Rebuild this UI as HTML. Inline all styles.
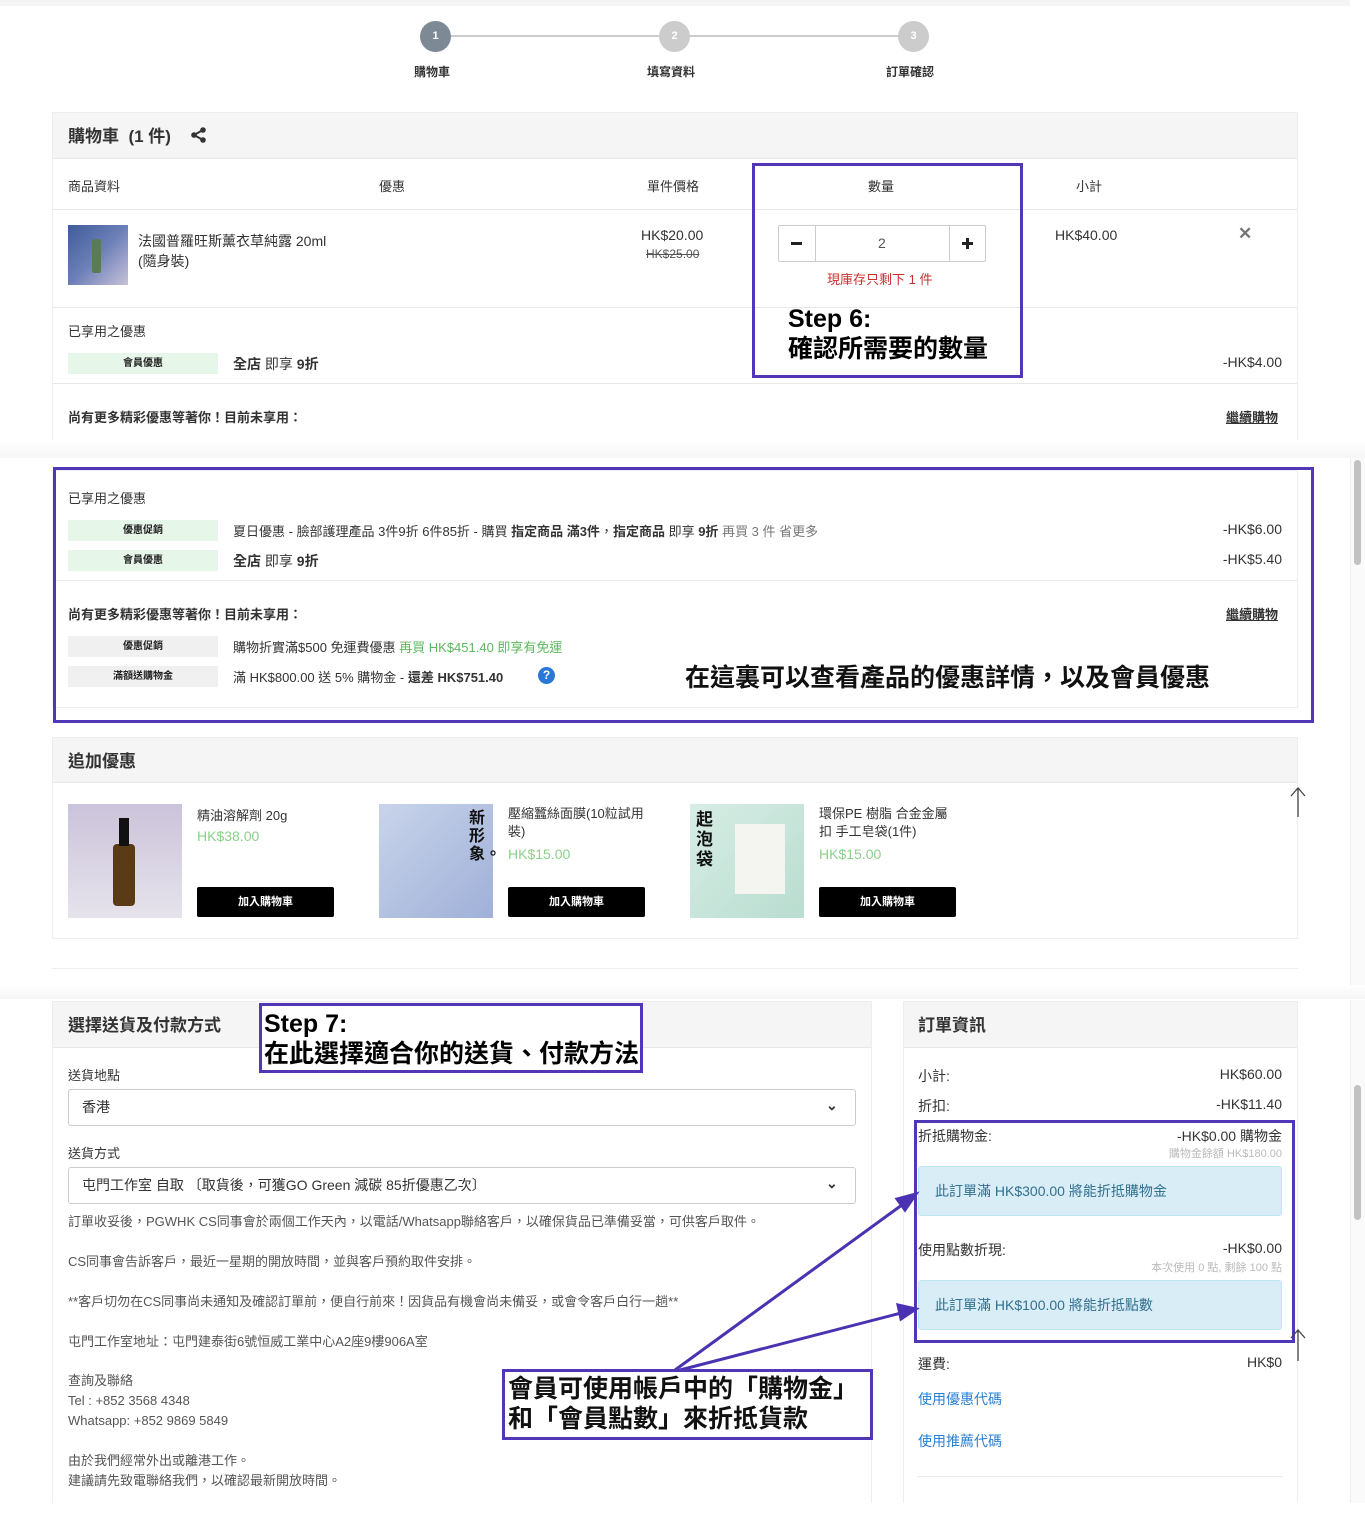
<!DOCTYPE html>
<html><head><meta charset="utf-8"><style>
*{margin:0;padding:0;box-sizing:border-box}
body{width:1365px;height:1535px;position:relative;background:#fff;font-family:"Liberation Sans","Noto Sans CJK TC",sans-serif;color:#333;overflow:hidden;font-size:13px}
.a{position:absolute;white-space:nowrap}
.hd{background:#f5f5f5}
.ln{position:absolute;height:1px;background:#e8e8e8}
.tag{position:absolute;width:150px;height:21px;font-size:10px;font-weight:bold;text-align:center;line-height:21px;color:#222}
.g{background:#e6f6e8}.gr{background:#f0f0f0}
.pb{position:absolute;border:3px solid #5236b8}
.r{text-align:right}
.btn{position:absolute;width:137px;height:30px;background:#000;color:#fff;font-size:11px;font-weight:bold;text-align:center;line-height:30px;border-radius:2px}
.sel{position:absolute;border:1px solid #ccc;border-radius:3px;height:37px;font-size:14px;line-height:35px;padding-left:13px;color:#333}
.info{position:absolute;left:918px;width:364px;height:50px;background:#d9edf7;border:1px solid #bce8f1;border-radius:3px;color:#31708f;font-size:14px;line-height:48px;padding-left:16px}
</style></head><body>
<div class="a" style="left:0;top:0;width:1350px;height:6px;background:#f4f4f4"></div>
<div class="a" style="left:450px;top:35px;width:450px;height:2px;background:#ccc"></div>
<div class="a" style="left:420px;top:21px;width:31px;height:31px;border-radius:50%;background:#7d8a96;color:#fff;font-size:11px;font-weight:bold;text-align:center;line-height:31px">1</div>
<div class="a" style="left:659px;top:21px;width:31px;height:31px;border-radius:50%;background:#ccc;color:#fff;font-size:11px;font-weight:bold;text-align:center;line-height:31px">2</div>
<div class="a" style="left:898px;top:21px;width:31px;height:31px;border-radius:50%;background:#ccc;color:#fff;font-size:11px;font-weight:bold;text-align:center;line-height:31px">3</div>
<div class="a" style="left:414px;top:63px;font-size:12px;font-weight:bold">購物車</div>
<div class="a" style="left:647px;top:63px;font-size:12px;font-weight:bold">填寫資料</div>
<div class="a" style="left:886px;top:63px;font-size:12px;font-weight:bold">訂單確認</div>

<div class="a" style="left:52px;top:112px;width:1246px;height:330px;border:1px solid #eee;border-bottom:none"></div>
<div class="a hd" style="left:53px;top:113px;width:1244px;height:46px;border-bottom:1px solid #e8e8e8"></div>
<div class="a" style="left:68px;top:122px;font-size:17px;font-weight:bold;color:#333">購物車 &nbsp;(1 件)</div>
<svg class="a" style="left:190px;top:127px" width="17" height="16" viewBox="0 0 17 16"><circle cx="13" cy="3" r="2.8" fill="#333"/><circle cx="4" cy="8" r="2.8" fill="#333"/><circle cx="13" cy="13" r="2.8" fill="#333"/><path d="M4 8L13 3M4 8L13 13" stroke="#333" stroke-width="2"/></svg>
<div class="a" style="left:68px;top:176px;font-size:13px">商品資料</div>
<div class="a" style="left:379px;top:176px;font-size:13px">優惠</div>
<div class="a" style="left:647px;top:176px;font-size:13px">單件價格</div>
<div class="a" style="left:868px;top:176px;font-size:13px">數量</div>
<div class="a" style="left:1076px;top:176px;font-size:13px">小計</div>
<div class="ln" style="left:53px;top:209px;width:1244px"></div>
<div class="a" style="left:68px;top:225px;width:60px;height:60px;background:linear-gradient(135deg,#3e5c9a 0%,#6c7fb8 50%,#c8c2d8 100%)"><div style="position:absolute;left:24px;top:14px;width:9px;height:34px;background:#5a7a5a;border-radius:2px"></div></div>
<div class="a" style="left:138px;top:231px;font-size:14px;line-height:20px">法國普羅旺斯薰衣草純露 20ml<br>(隨身裝)</div>
<div class="a" style="left:641px;top:227px;font-size:14px">HK$20.00</div>
<div class="a" style="left:646px;top:247px;font-size:12px;text-decoration:line-through;color:#555">HK$25.00</div>
<div class="a" style="left:778px;top:225px;width:208px;height:37px;border:1px solid #ccc;border-radius:2px"></div>
<div class="a" style="left:815px;top:225px;width:1px;height:37px;background:#ccc"></div>
<div class="a" style="left:949px;top:225px;width:1px;height:37px;background:#ccc"></div>
<div class="a" style="left:791px;top:242px;width:11px;height:3px;background:#222"></div>
<div class="a" style="left:962px;top:242px;width:11px;height:3px;background:#222"></div>
<div class="a" style="left:966px;top:238px;width:3px;height:11px;background:#222"></div>
<div class="a" style="left:878px;top:235px;font-size:14px;color:#555">2</div>
<div class="a" style="left:827px;top:269px;font-size:13px;color:#c9302c">現庫存只剩下 1 件</div>
<div class="a" style="left:1055px;top:227px;font-size:14px">HK$40.00</div>
<div class="a" style="left:1238px;top:224px;font-size:17px;color:#777;font-weight:bold">✕</div>
<div class="ln" style="left:53px;top:307px;width:1244px"></div>
<div class="a" style="left:68px;top:321px;font-size:13px">已享用之優惠</div>
<div class="tag g" style="left:68px;top:353px">會員優惠</div>
<div class="a" style="left:233px;top:354px;font-size:14px"><b>全店</b> 即享 <b>9折</b></div>
<div class="a r" style="left:1180px;width:102px;top:354px;font-size:14px">-HK$4.00</div>
<div class="ln" style="left:53px;top:383px;width:1244px"></div>
<div class="a" style="left:68px;top:407px;font-size:13px;font-weight:bold">尚有更多精彩優惠等著你！目前未享用：</div>
<div class="a" style="left:1226px;top:407px;font-size:13px;font-weight:bold;text-decoration:underline">繼續購物</div>
<div class="pb" style="left:752px;top:163px;width:271px;height:215px"></div>
<div class="a" style="left:788px;top:304px;font-size:25px;font-weight:bold;color:#000;line-height:30px">Step 6:<br>確認所需要的數量</div>

<div class="a" style="left:0;top:440px;width:1365px;height:18px;background:linear-gradient(#fff,#f6f6f6)"></div>

<div class="a" style="left:52px;top:470px;width:1246px;height:238px;border:1px solid #eee"></div>
<div class="a" style="left:68px;top:488px;font-size:13px">已享用之優惠</div>
<div class="tag g" style="left:68px;top:520px">優惠促銷</div>
<div class="a" style="left:233px;top:521px;font-size:13px">夏日優惠 - 臉部護理產品 3件9折 6件85折 - 購買 <b>指定商品 滿3件</b>，<b>指定商品</b> 即享 <b>9折</b> <span style="color:#777">再買 3 件 省更多</span></div>
<div class="a r" style="left:1180px;width:102px;top:521px;font-size:14px">-HK$6.00</div>
<div class="tag g" style="left:68px;top:550px">會員優惠</div>
<div class="a" style="left:233px;top:551px;font-size:14px"><b>全店</b> 即享 <b>9折</b></div>
<div class="a r" style="left:1180px;width:102px;top:551px;font-size:14px">-HK$5.40</div>
<div class="ln" style="left:53px;top:580px;width:1244px"></div>
<div class="a" style="left:68px;top:604px;font-size:13px;font-weight:bold">尚有更多精彩優惠等著你！目前未享用：</div>
<div class="a" style="left:1226px;top:604px;font-size:13px;font-weight:bold;text-decoration:underline">繼續購物</div>
<div class="tag gr" style="left:68px;top:636px">優惠促銷</div>
<div class="a" style="left:233px;top:637px;font-size:13px">購物折實滿$500 免運費優惠 <span style="color:#5cb85c">再買 HK$451.40 即享有免運</span></div>
<div class="tag gr" style="left:68px;top:666px">滿額送購物金</div>
<div class="a" style="left:233px;top:667px;font-size:13px">滿 HK$800.00 送 5% 購物金 - <b>還差 HK$751.40</b></div>
<div class="a" style="left:538px;top:667px;width:17px;height:17px;border-radius:50%;background:#2a78d6;color:#fff;font-size:12px;font-weight:bold;text-align:center;line-height:17px">?</div>
<div class="a" style="left:685px;top:658px;font-size:25px;font-weight:bold;color:#111">在這裏可以查看產品的優惠詳情，以及會員優惠</div>
<div class="pb" style="left:53px;top:467px;width:1261px;height:256px"></div>

<div class="a" style="left:52px;top:737px;width:1246px;height:202px;border:1px solid #eee"></div>
<div class="a hd" style="left:53px;top:738px;width:1244px;height:45px;border-bottom:1px solid #e8e8e8"></div>
<div class="a" style="left:68px;top:747px;font-size:17px;font-weight:bold">追加優惠</div>
<div class="a" style="left:68px;top:804px;width:114px;height:114px;background:linear-gradient(#cbc3da,#e6e3ec)"><div style="position:absolute;left:45px;top:40px;width:22px;height:62px;background:#5b3a16;border-radius:4px"></div><div style="position:absolute;left:51px;top:14px;width:10px;height:28px;background:#111"></div></div>
<div class="a" style="left:197px;top:805px;font-size:13px">精油溶解劑 20g</div>
<div class="a" style="left:197px;top:828px;font-size:14px;color:#8bd08b">HK$38.00</div>
<div class="btn" style="left:197px;top:887px">加入購物車</div>
<div class="a" style="left:379px;top:804px;width:114px;height:114px;background:linear-gradient(135deg,#c9d4ea,#9fb0d8)"><div style="position:absolute;left:90px;top:6px;font-size:16px;font-weight:bold;color:#111;white-space:normal;width:18px;line-height:18px">新形象。</div></div>
<div class="a" style="left:508px;top:805px;font-size:13px;line-height:18px">壓縮蠶絲面膜(10粒試用<br>裝)</div>
<div class="a" style="left:508px;top:846px;font-size:14px;color:#8bd08b">HK$15.00</div>
<div class="btn" style="left:508px;top:887px">加入購物車</div>
<div class="a" style="left:690px;top:804px;width:114px;height:114px;background:linear-gradient(135deg,#d7ede5,#b9ddd0)"><div style="position:absolute;left:6px;top:6px;font-size:17px;font-weight:bold;color:#111;white-space:normal;width:18px;line-height:20px">起泡袋</div><div style="position:absolute;left:45px;top:20px;width:50px;height:70px;background:#f4f4f0"></div></div>
<div class="a" style="left:819px;top:805px;font-size:13px;line-height:18px">環保PE 樹脂 合金金屬<br>扣 手工皂袋(1件)</div>
<div class="a" style="left:819px;top:846px;font-size:14px;color:#8bd08b">HK$15.00</div>
<div class="btn" style="left:819px;top:887px">加入購物車</div>
<svg class="a" style="left:1289px;top:786px" width="18" height="32"><path d="M9 31V2M2 10L9 2L16 10" stroke="#444" stroke-width="1.3" fill="none"/></svg>

<div class="ln" style="left:52px;top:968px;width:1246px;background:#eee"></div>
<div class="a" style="left:0;top:985px;width:1365px;height:14px;background:linear-gradient(#fff,#f6f6f6)"></div>

<div class="a" style="left:52px;top:1001px;width:820px;height:510px;border:1px solid #eee"></div>
<div class="a hd" style="left:53px;top:1002px;width:818px;height:46px;border-bottom:1px solid #e8e8e8"></div>
<div class="a" style="left:68px;top:1011px;font-size:17px;font-weight:bold">選擇送貨及付款方式</div>
<div class="a" style="left:68px;top:1065px;font-size:13px">送貨地點</div>
<div class="sel" style="left:68px;top:1089px;width:788px">香港</div>
<div class="a" style="left:826px;top:1097px;font-size:14px;font-weight:bold">⌄</div>
<div class="a" style="left:68px;top:1143px;font-size:13px">送貨方式</div>
<div class="sel" style="left:68px;top:1167px;width:788px">屯門工作室 自取 〔取貨後，可獲GO Green 減碳 85折優惠乙次〕</div>
<div class="a" style="left:826px;top:1175px;font-size:14px;font-weight:bold">⌄</div>
<div class="a" style="left:68px;top:1211px;font-size:13px;color:#555">訂單收妥後，PGWHK CS同事會於兩個工作天內，以電話/Whatsapp聯絡客戶，以確保貨品已準備妥當，可供客戶取件。</div>
<div class="a" style="left:68px;top:1251px;font-size:13px;color:#555">CS同事會告訴客戶，最近一星期的開放時間，並與客戶預約取件安排。</div>
<div class="a" style="left:68px;top:1291px;font-size:13px;color:#555">**客戶切勿在CS同事尚未通知及確認訂單前，便自行前來！因貨品有機會尚未備妥，或會令客戶白行一趟**</div>
<div class="a" style="left:68px;top:1331px;font-size:13px;color:#555">屯門工作室地址：屯門建泰街6號恒威工業中心A2座9樓906A室</div>
<div class="a" style="left:68px;top:1371px;font-size:13px;color:#555;line-height:20px">查詢及聯絡<br>Tel : +852 3568 4348<br>Whatsapp: +852 9869 5849</div>
<div class="a" style="left:68px;top:1451px;font-size:13px;color:#555;line-height:20px">由於我們經常外出或離港工作。<br>建議請先致電聯絡我們，以確認最新開放時間。</div>
<div class="a" style="left:261px;top:1005px;width:381px;height:67px;background:#fff"></div>
<div class="pb" style="left:259px;top:1003px;width:384px;height:70px"></div>
<div class="a" style="left:264px;top:1009px;font-size:25px;font-weight:bold;color:#000;line-height:30px">Step 7:<br>在此選擇適合你的送貨、付款方法</div>

<div class="a" style="left:903px;top:1001px;width:395px;height:510px;border:1px solid #eee"></div>
<div class="a hd" style="left:904px;top:1002px;width:393px;height:46px;border-bottom:1px solid #e8e8e8"></div>
<div class="a" style="left:918px;top:1011px;font-size:17px;font-weight:bold">訂單資訊</div>
<div class="a" style="left:918px;top:1066px;font-size:14px">小計:</div><div class="a r" style="left:1150px;width:132px;top:1066px;font-size:14px">HK$60.00</div>
<div class="a" style="left:918px;top:1096px;font-size:14px">折扣:</div><div class="a r" style="left:1150px;width:132px;top:1096px;font-size:14px">-HK$11.40</div>
<div class="a" style="left:918px;top:1126px;font-size:14px">折抵購物金:</div><div class="a r" style="left:1130px;width:152px;top:1126px;font-size:14px">-HK$0.00 購物金</div>
<div class="a r" style="left:1100px;width:182px;top:1145px;font-size:11px;color:#bbb">購物金餘額 HK$180.00</div>
<div class="info" style="top:1166px">此訂單滿 HK$300.00 將能折抵購物金</div>
<div class="a" style="left:918px;top:1240px;font-size:14px">使用點數折現:</div><div class="a r" style="left:1150px;width:132px;top:1240px;font-size:14px">-HK$0.00</div>
<div class="a r" style="left:1100px;width:182px;top:1259px;font-size:11px;color:#bbb">本次使用 0 點, 剩餘 100 點</div>
<div class="info" style="top:1280px">此訂單滿 HK$100.00 將能折抵點數</div>
<div class="pb" style="left:914px;top:1120px;width:381px;height:223px"></div>
<div class="a" style="left:918px;top:1354px;font-size:14px">運費:</div><div class="a r" style="left:1150px;width:132px;top:1354px;font-size:14px">HK$0</div>
<div class="a" style="left:918px;top:1389px;font-size:14px;color:#2a7fd0">使用優惠代碼</div>
<div class="a" style="left:918px;top:1431px;font-size:14px;color:#2a7fd0">使用推薦代碼</div>
<div class="ln" style="left:918px;top:1476px;width:364px"></div>
<svg class="a" style="left:1289px;top:1328px" width="18" height="34"><path d="M9 33V2M2 10L9 2L16 10" stroke="#444" stroke-width="1.3" fill="none"/></svg>

<svg class="a" style="left:0;top:0" width="1365" height="1535"><g stroke="#4b32b3" stroke-width="3" fill="#4b32b3"><line x1="675" y1="1370" x2="906" y2="1202"/><polygon points="916,1194 897,1199 905,1210"/><line x1="680" y1="1370" x2="905" y2="1312"/><polygon points="916,1309 898,1305 901,1319"/></g></svg>
<div class="a" style="left:504px;top:1371px;width:368px;height:68px;background:#fff"></div>
<div class="pb" style="left:502px;top:1369px;width:371px;height:71px"></div>
<div class="a" style="left:508px;top:1374px;font-size:25px;font-weight:bold;color:#111;line-height:30px">會員可使用帳戶中的「購物金」<br>和「會員點數」來折抵貨款</div>

<div class="a" style="left:0;top:1503px;width:1365px;height:32px;background:#fff"></div>
<div class="a" style="left:1350px;top:458px;width:15px;height:527px;background:#fafafa;border-left:1px solid #eee"></div>
<div class="a" style="left:1354px;top:460px;width:7px;height:105px;border-radius:4px;background:#c2c2c2"></div>
<div class="a" style="left:1350px;top:1000px;width:15px;height:503px;background:#fafafa;border-left:1px solid #eee"></div>
<div class="a" style="left:1354px;top:1085px;width:7px;height:135px;border-radius:4px;background:#c2c2c2"></div>
</body></html>
